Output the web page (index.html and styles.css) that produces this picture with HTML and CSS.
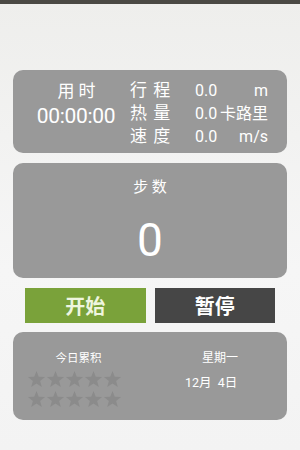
FILE: index.html
```html
<!DOCTYPE html>
<html lang="zh">
  <head>
    <meta charset="UTF-8" />
    <meta name="viewport" content="width=device-width, initial-scale=1.0" />
    <title>计步器</title>
    <link rel="stylesheet" href="styles.css">
  </head>
  <body>
    <div class="status-bar"></div>

    <div class="screen">
      <!-- Time / distance / calories / speed -->
      <div class="card stats-card">
        <div class="time-col">
          <div class="time-label">用 时</div>
          <div class="time-value">00:00:00</div>
        </div>
        <div class="stat-grid">
          <span class="stat-name">行 程</span>
          <span class="stat-num">0.0</span>
          <span class="stat-unit">m</span>
          <span class="stat-name">热 量</span>
          <span class="stat-num">0.0</span>
          <span class="stat-unit">卡路里</span>
          <span class="stat-name">速 度</span>
          <span class="stat-num">0.0</span>
          <span class="stat-unit">m/s</span>
        </div>
      </div>

      <!-- Steps -->
      <div class="card steps-card">
        <div class="steps-label">步 数</div>
        <div class="steps-value">0</div>
      </div>

      <div class="buttons">
        <button class="btn start-btn">开始</button>
        <button class="btn pause-btn">暂停</button>
      </div>

      <!-- Today summary -->
      <div class="card today-card">
        <div class="today-left">
          <div class="today-label">今日累积</div>
          <div class="stars">
            <svg viewBox="0 0 20 20"><polygon points="10,1 12.4,7.2 19,7.4 13.8,11.5 15.6,18 10,14.3 4.4,18 6.2,11.5 1,7.4 7.6,7.2"/></svg>
            <svg viewBox="0 0 20 20"><polygon points="10,1 12.4,7.2 19,7.4 13.8,11.5 15.6,18 10,14.3 4.4,18 6.2,11.5 1,7.4 7.6,7.2"/></svg>
            <svg viewBox="0 0 20 20"><polygon points="10,1 12.4,7.2 19,7.4 13.8,11.5 15.6,18 10,14.3 4.4,18 6.2,11.5 1,7.4 7.6,7.2"/></svg>
            <svg viewBox="0 0 20 20"><polygon points="10,1 12.4,7.2 19,7.4 13.8,11.5 15.6,18 10,14.3 4.4,18 6.2,11.5 1,7.4 7.6,7.2"/></svg>
            <svg viewBox="0 0 20 20"><polygon points="10,1 12.4,7.2 19,7.4 13.8,11.5 15.6,18 10,14.3 4.4,18 6.2,11.5 1,7.4 7.6,7.2"/></svg>
            <svg viewBox="0 0 20 20"><polygon points="10,1 12.4,7.2 19,7.4 13.8,11.5 15.6,18 10,14.3 4.4,18 6.2,11.5 1,7.4 7.6,7.2"/></svg>
            <svg viewBox="0 0 20 20"><polygon points="10,1 12.4,7.2 19,7.4 13.8,11.5 15.6,18 10,14.3 4.4,18 6.2,11.5 1,7.4 7.6,7.2"/></svg>
            <svg viewBox="0 0 20 20"><polygon points="10,1 12.4,7.2 19,7.4 13.8,11.5 15.6,18 10,14.3 4.4,18 6.2,11.5 1,7.4 7.6,7.2"/></svg>
            <svg viewBox="0 0 20 20"><polygon points="10,1 12.4,7.2 19,7.4 13.8,11.5 15.6,18 10,14.3 4.4,18 6.2,11.5 1,7.4 7.6,7.2"/></svg>
            <svg viewBox="0 0 20 20"><polygon points="10,1 12.4,7.2 19,7.4 13.8,11.5 15.6,18 10,14.3 4.4,18 6.2,11.5 1,7.4 7.6,7.2"/></svg>
          </div>
        </div>
        <div class="today-right">
          <div class="weekday">星期一</div>
          <div class="date">12月&nbsp;&nbsp;4日</div>
        </div>
      </div>
    </div>
  </body>
</html>
```

FILE: styles.css
```css
* {
  margin: 0;
  padding: 0;
  box-sizing: border-box;
}

body {
  font-family: Roboto, "Noto Sans CJK SC", sans-serif;
  background: linear-gradient(#eeeeec, #f6f6f6 60%, #f3f3f3);
  width: 300px;
  height: 450px;
  overflow: hidden;
  color: white;
}

.status-bar {
  height: 4px;
  background: #4a4944;
}

.screen {
  padding: 66px 13px 0;
  display: flex;
  flex-direction: column;
}

.card {
  background-color: #999999;
  border-radius: 10px;
}

/* Stats card */
.stats-card {
  height: 83px;
  display: flex;
  padding: 8px 0 0 22px;
}

.time-col {
  width: 82px;
  text-align: center;
}

.time-label {
  font-size: 17px;
  line-height: 22px;
  margin-top: 2px;
  padding-left: 1px;
}

.time-value {
  font-size: 21px;
  line-height: 26px;
  margin-top: 1px;
  letter-spacing: -0.3px;
}

.stat-grid {
  margin-left: 13px;
  display: grid;
  grid-template-columns: 65px 24px 49px;
  grid-auto-rows: 23px;
  font-size: 17px;
  line-height: 23px;
  margin-top: 1px;
}

.stat-name {
  letter-spacing: 1px;
}

.stat-num {
  font-size: 16px;
}

.stat-unit {
  text-align: right;
  font-size: 16px;
  white-space: nowrap;
}

/* Steps card */
.steps-card {
  margin-top: 10px;
  height: 115px;
  text-align: center;
  padding-top: 13px;
}

.steps-label {
  font-size: 15px;
  line-height: 22px;
}

.steps-value {
  font-size: 46px;
  line-height: 50px;
  margin-top: 17px;
}

/* Buttons */
.buttons {
  display: flex;
  gap: 9px;
  padding: 0 12px;
  margin-top: 10px;
}

.btn {
  flex: 1;
  height: 35px;
  border: none;
  font-family: "Noto Sans CJK SC", sans-serif;
  font-size: 20px;
  font-weight: bold;
}

.start-btn {
  background-color: #7aa23a;
  color: #eef5df;
}

.pause-btn {
  background-color: #464646;
  color: white;
}

/* Today card */
.today-card {
  margin-top: 9px;
  height: 88px;
  display: flex;
  padding: 18px 0 0 14px;
}

.today-left {
  width: 98px;
}

.today-label {
  font-size: 11.5px;
  line-height: 16px;
  text-align: center;
  padding-left: 5px;
}

.stars {
  display: grid;
  grid-template-columns: repeat(5, 19px);
  grid-auto-rows: 20px;
  margin-top: 4px;
}

.stars svg {
  width: 19px;
  height: 19px;
  fill: #8b8b8b;
}

.today-right {
  margin-left: 60px;
  width: 60px;
}

.weekday {
  font-size: 12px;
  line-height: 16px;
  padding-left: 17px;
}

.date {
  font-size: 12.5px;
  line-height: 16px;
  margin-top: 9px;
}
```
